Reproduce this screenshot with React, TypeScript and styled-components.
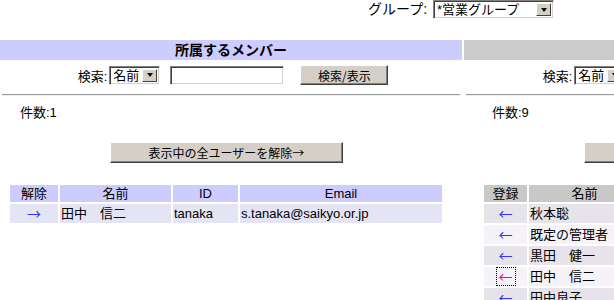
import React from 'react';
import styled, { createGlobalStyle } from 'styled-components';

const Global = createGlobalStyle`
  html, body { margin: 0; padding: 0; overflow: hidden; background: #fff; }
  body {
    font-family: "Liberation Sans", "Noto Sans CJK JP", sans-serif;
    font-size: 12px;
    color: #000;
  }
`;

const Page = styled.div`
  width: 928px;
`;

const TopBar = styled.div`
  height: 40px;
  display: flex;
  align-items: flex-start;
  padding-left: 368px;
  gap: 6px;
`;

const TopLabel = styled.span`
  font-size: 14px;
  line-height: 19px;
`;

const SelectBox = styled.span<{ $w: number; $h: number }>`
  display: inline-flex;
  box-sizing: border-box;
  width: ${(p) => p.$w}px;
  height: ${(p) => p.$h}px;
  border: 1px solid;
  border-color: #808080 #fff #fff #808080;
  box-shadow: inset 1px 1px 0 #404040, inset -1px -1px 0 #d4d0c8;
  background: #fff;
  padding: 2px;
  align-items: stretch;
`;

const SelectValue = styled.span`
  flex: 1;
  padding-left: 1px;
  font-size: 13px;
  line-height: 13px;
  white-space: nowrap;
  overflow: hidden;
`;

const SelectArrow = styled.span`
  width: 15px;
  box-sizing: border-box;
  background: #d4d0c8;
  border: 1px solid;
  border-color: #fff #404040 #404040 #fff;
  display: flex;
  align-items: center;
  justify-content: center;
  &::after {
    content: '';
    border-left: 3.5px solid transparent;
    border-right: 3.5px solid transparent;
    border-top: 4px solid #000;
  }
`;

const Panels = styled.div`
  display: grid;
  grid-template-columns: 462px 464px;
  column-gap: 2px;
`;

const Panel = styled.section`
  display: flex;
  flex-direction: column;
  align-items: stretch;
`;

const PanelHeader = styled.div<{ $tone: 'blue' | 'gray' }>`
  height: 20px;
  background: ${(p) => (p.$tone === 'blue' ? '#ccccff' : '#cccccc')};
  font-weight: bold;
  font-size: 14px;
  line-height: 20px;
  text-align: center;
  white-space: nowrap;
`;

const SearchRow = styled.div`
  height: 30px;
  display: flex;
  justify-content: center;
  align-items: center;
  padding-left: 4px;
`;

const SearchLabel = styled.span`
  font-size: 13px;
  margin-right: 2px;
`;

const TextInput = styled.span`
  display: inline-block;
  box-sizing: border-box;
  width: 114px;
  height: 19px;
  margin-left: 10px;
  border: 1px solid;
  border-color: #808080 #fff #fff #808080;
  box-shadow: inset 1px 1px 0 #404040, inset -1px -1px 0 #d4d0c8;
  background: #fff;
`;

const WinButton = styled.span<{ $w: number; $h: number }>`
  display: inline-flex;
  align-items: center;
  justify-content: center;
  box-sizing: border-box;
  width: ${(p) => p.$w}px;
  height: ${(p) => p.$h}px;
  background: #d4d0c8;
  border: 1px solid;
  border-color: #fff #404040 #404040 #fff;
  box-shadow: inset -1px -1px 0 #808080;
  font-family: "Noto Sans CJK JP", sans-serif;
  font-size: 12px;
  white-space: nowrap;
`;

const SearchButton = styled(WinButton)`
  margin-left: 16px;
`;

const Rule = styled.hr`
  margin: 4px 2px 0;
  height: 0;
  border: 0;
  border-top: 1px solid #999;
  border-bottom: 1px solid #eee;
`;

const Count = styled.div<{ $indent: number }>`
  padding: 8px 0 0 ${(p) => p.$indent}px;
  line-height: 18px;
  font-size: 13px;
`;

const ActionRow = styled.div<{ $indent: number }>`
  margin-top: 20px;
  padding-left: ${(p) => p.$indent}px;
  display: flex;
`;

const MemberTable = styled.table<{ $indent: number; $w: number }>`
  margin: 20px 0 0 ${(p) => p.$indent}px;
  width: ${(p) => p.$w}px;
  border-collapse: separate;
  border-spacing: 2px;
  font-size: 13px;
  table-layout: fixed;
`;

const Col = styled.col<{ $w: number }>`
  width: ${(p) => p.$w}px;
`;

const HeadCell = styled.th<{ $tone: 'blue' | 'gray' }>`
  height: 17px;
  padding: 0;
  line-height: 17px;
  font-weight: normal;
  font-size: 13px;
  text-align: center;
  white-space: nowrap;
  overflow: hidden;
  background: ${(p) => (p.$tone === 'blue' ? '#ccccff' : '#c8c8c8')};
`;

const Row = styled.tr<{ $bg: string }>`
  background: ${(p) => p.$bg};
`;

const Cell = styled.td<{ $center?: boolean }>`
  box-sizing: border-box;
  height: 19px;
  padding: 0 0 0 ${(p) => (p.$center ? 0 : 1)}px;
  line-height: 19px;
  text-align: ${(p) => (p.$center ? 'center' : 'left')};
  vertical-align: top;
  white-space: nowrap;
`;

const ArrowLink = styled.span<{ $active?: boolean }>`
  color: ${(p) => (p.$active ? '#ff0099' : '#3333ff')};
  outline: ${(p) => (p.$active ? '1px dotted #000' : 'none')};
  font-family: "Noto Sans CJK JP", sans-serif;
  font-size: 14px;
  line-height: 17px;
  height: 17px;
  margin-top: 1px;
  padding: 0 2px;
  display: inline-block;
  vertical-align: top;
`;

const Select = ({ w, h, value }: { w: number; h: number; value: string }) => (
  <SelectBox $w={w} $h={h}>
    <SelectValue>{value}</SelectValue>
    <SelectArrow />
  </SelectBox>
);

const others = ['秋本聡', '既定の管理者', '黒田　健一', '田中　信二', '田中良子', '山田　太郎', '佐藤　花子', '鈴木　一郎', '高橋　次郎'];

export default function App() {
  return (
    <Page>
      <Global />
      <TopBar>
        <TopLabel>グループ:</TopLabel>
        <Select w={121} h={19} value="*営業グループ" />
      </TopBar>
      <Panels>
        <Panel>
          <PanelHeader $tone="blue">所属するメンバー</PanelHeader>
          <SearchRow>
            <SearchLabel>検索:</SearchLabel>
            <Select w={51} h={19} value="名前" />
            <TextInput />
            <SearchButton $w={88} $h={20}>検索/表示</SearchButton>
          </SearchRow>
          <Rule />
          <Count $indent={20}>件数:1</Count>
          <ActionRow $indent={110}>
            <WinButton $w={233} $h={21}>表示中の全ユーザーを解除→</WinButton>
          </ActionRow>
          <MemberTable $indent={8} $w={436}>
            <colgroup>
              <Col $w={48} />
              <Col $w={111} />
              <Col $w={65} />
              <Col $w={202} />
            </colgroup>
            <thead>
              <tr>
                <HeadCell $tone="blue">解除</HeadCell>
                <HeadCell $tone="blue">名前</HeadCell>
                <HeadCell $tone="blue">ID</HeadCell>
                <HeadCell $tone="blue">Email</HeadCell>
              </tr>
            </thead>
            <tbody>
              <Row $bg="#e4e4f4">
                <Cell $center><ArrowLink>→</ArrowLink></Cell>
                <Cell>田中　信二</Cell>
                <Cell>tanaka</Cell>
                <Cell>s.tanaka@saikyo.or.jp</Cell>
              </Row>
            </tbody>
          </MemberTable>
        </Panel>
        <Panel>
          <PanelHeader $tone="gray">所属していないメンバー</PanelHeader>
          <SearchRow>
            <SearchLabel>検索:</SearchLabel>
            <Select w={51} h={19} value="名前" />
            <TextInput />
            <SearchButton $w={88} $h={20}>検索/表示</SearchButton>
          </SearchRow>
          <Rule />
          <Count $indent={28}>件数:9</Count>
          <ActionRow $indent={120}>
            <WinButton $w={233} $h={21}>←表示中の全ユーザーを登録</WinButton>
          </ActionRow>
          <MemberTable $indent={18} $w={426}>
            <colgroup>
              <Col $w={43} />
              <Col $w={111} />
              <Col $w={65} />
              <Col $w={197} />
            </colgroup>
            <thead>
              <tr>
                <HeadCell $tone="gray">登録</HeadCell>
                <HeadCell $tone="gray">名前</HeadCell>
                <HeadCell $tone="gray">ID</HeadCell>
                <HeadCell $tone="gray">Email</HeadCell>
              </tr>
            </thead>
            <tbody>
              {others.map((name, i) => (
                <Row key={name} $bg={i % 2 === 0 ? '#e6e4ea' : '#f5f3f7'}>
                  <Cell $center><ArrowLink $active={i === 3}>←</ArrowLink></Cell>
                  <Cell>{name}</Cell>
                  <Cell></Cell>
                  <Cell></Cell>
                </Row>
              ))}
            </tbody>
          </MemberTable>
        </Panel>
      </Panels>
    </Page>
  );
}
